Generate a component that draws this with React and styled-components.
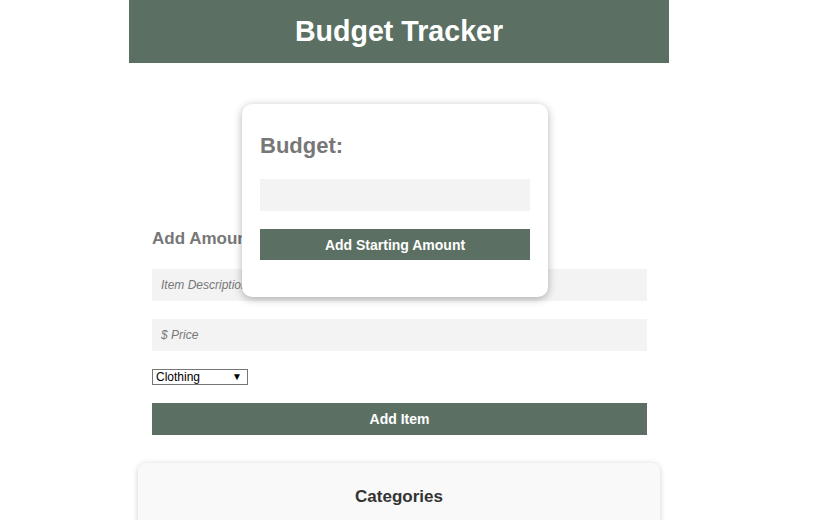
import React, { useState } from "react";
import styled, { createGlobalStyle } from "styled-components";

const GlobalStyle = createGlobalStyle`
  body {
    margin: 0;
    background: #ffffff;
    font-family: "Liberation Sans", Arial, sans-serif;
  }
`;

const green = "#5b7063";

function App() {
  const [budget, setBudget] = useState("");
  const [category, setCategory] = useState("Clothing");

  return (
    <Page>
      <GlobalStyle />
      <Wrapper>
        <Header>
          <Title>Budget Tracker</Title>
        </Header>

        <FormSection>
          <SectionTitle>Add Amount</SectionTitle>
          <Field placeholder="Item Description" />
          <Field placeholder="$ Price" />
          <SelectWrap>
            <Select value={category} onChange={(e) => setCategory(e.target.value)}>
              <option>Clothing</option>
              <option>Food</option>
              <option>Bills</option>
              <option>Other</option>
            </Select>
            <Caret>▼</Caret>
          </SelectWrap>
          <Button>Add Item</Button>
        </FormSection>

        <CategoriesCard>
          <CardTitle>Categories</CardTitle>
        </CategoriesCard>

        <Modal>
          <ModalTitle>Budget:</ModalTitle>
          <ModalField value={budget} onChange={(e) => setBudget(e.target.value)} />
          <Button $small>Add Starting Amount</Button>
        </Modal>
      </Wrapper>
    </Page>
  );
}

export default App;

const Page = styled.div`
  width: 826px;
  height: 520px;
  overflow: hidden;
`;

const Wrapper = styled.div`
  position: relative;
  width: 540px;
  margin-left: 129px;
`;

const Header = styled.header`
  height: 63px;
  background: ${green};
  display: flex;
  align-items: center;
  justify-content: center;
`;

const Title = styled.h1`
  margin: 0;
  color: #ffffff;
  font-size: 28.6px;
  font-weight: 700;
  line-height: 1;
  padding-bottom: 1px;
`;

const FormSection = styled.section`
  display: flex;
  flex-direction: column;
  padding: 0 22px 0 23px;
  margin-top: 166px;
`;

const SectionTitle = styled.h3`
  margin: 0 0 20px;
  font-size: 17px;
  line-height: 20px;
  color: #777777;
  font-weight: 700;
`;

const Field = styled.input`
  box-sizing: border-box;
  height: 32px;
  width: 100%;
  border: none;
  outline: none;
  background: #f3f3f3;
  padding: 0 9px;
  margin-bottom: 18px;
  font-family: "Liberation Sans", Arial, sans-serif;
  font-size: 12px;
  &::placeholder {
    color: #777777;
    font-style: italic;
  }
`;

const SelectWrap = styled.div`
  position: relative;
  width: 96px;
  height: 16px;
  margin: 0 0 18px;
`;

const Select = styled.select`
  display: block;
  appearance: none;
  box-sizing: border-box;
  width: 96px;
  height: 16px;
  margin: 0;
  border: 1px solid #767676;
  border-radius: 0;
  background: #ffffff;
  padding: 0 0 0 3px;
  font-family: "Liberation Sans", Arial, sans-serif;
  font-size: 12px;
  line-height: 14px;
  color: #000000;
  outline: none;
`;

const Caret = styled.span`
  position: absolute;
  right: 6px;
  top: 3px;
  font-size: 10px;
  line-height: 10px;
  color: #000000;
  pointer-events: none;
`;

const Button = styled.button`
  box-sizing: border-box;
  width: 100%;
  height: ${(p) => (p.$small ? "31px" : "32px")};
  border: none;
  background: ${green};
  color: #ffffff;
  font-family: "Liberation Sans", Arial, sans-serif;
  font-size: 14px;
  font-weight: 700;
  cursor: pointer;
`;

const CategoriesCard = styled.div`
  margin: 28px 9px 0;
  height: 120px;
  background: #f9f9f9;
  border-radius: 8px;
  box-shadow: 0 1px 6px rgba(0, 0, 0, 0.18);
  display: flex;
  justify-content: center;
`;

const CardTitle = styled.h3`
  margin: 24px 0 0;
  font-size: 17px;
  line-height: 20px;
  color: #333333;
  font-weight: 700;
`;

const Modal = styled.div`
  position: absolute;
  left: 113px;
  top: 104px;
  width: 306px;
  box-sizing: border-box;
  padding: 30px 18px 37px;
  background: #ffffff;
  border-radius: 10px;
  box-shadow: 0 2px 8px rgba(0, 0, 0, 0.3);
  display: flex;
  flex-direction: column;
`;

const ModalTitle = styled.h2`
  margin: 0 0 21px;
  font-size: 22px;
  line-height: 24px;
  color: #777777;
  font-weight: 700;
`;

const ModalField = styled.input`
  box-sizing: border-box;
  height: 32px;
  width: 100%;
  border: none;
  outline: none;
  background: #f3f3f3;
  margin-bottom: 18px;
`;
